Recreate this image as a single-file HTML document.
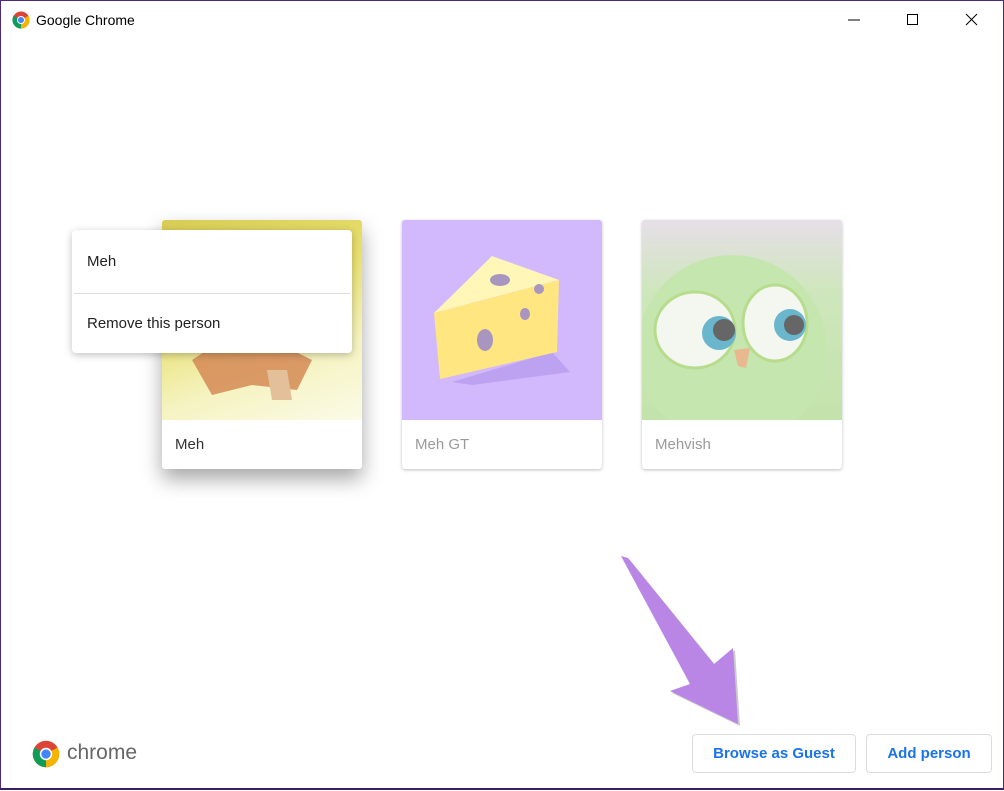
<!DOCTYPE html>
<html><head><style>
*{margin:0;padding:0;box-sizing:border-box}
body{width:1004px;height:791px;background:#fff;font-family:"Liberation Sans",sans-serif;position:relative;overflow:hidden}
.frame{position:absolute;left:0;top:0;width:1004px;height:790px;border:1px solid #4b2a7a;border-bottom:2px solid #3a1f63}
.title{position:absolute;left:36px;top:12px;font-size:14px;color:#000}
.card{position:absolute;top:220px;width:200px;height:249px;background:#fff;border-radius:3px;box-shadow:0 1px 3px rgba(0,0,0,.25);overflow:hidden}
.card .img{height:200px;position:relative}
.card .name{position:absolute;left:13px;top:216px;font-size:15px;color:#999}
.menu{position:absolute;left:72px;top:230px;width:280px;height:123px;background:#fff;border-radius:4px;box-shadow:0 2px 8px rgba(0,0,0,.25)}
.menu div{font-size:15px;color:#222;position:absolute;left:15px}
.btn{position:absolute;top:734px;height:39px;border:1px solid #dadce0;border-radius:4px;color:#1a73e8;font-size:15px;font-weight:bold;text-align:center;line-height:38px}
</style></head><body>
<div class="frame"></div>
<svg style="position:absolute;left:12px;top:11px" width="18" height="18" viewBox="0 0 18 18"><circle cx="9" cy="9" r="8.5" fill="#db4437"/><path d="M9 9 L16.4 4.8 A8.5 8.5 0 0 1 9 17.5Z" fill="#f4b400"/><path d="M9 9 L1.6 13.2 A8.5 8.5 0 0 1 1.6 4.8 L9 9 L9 17.5 A8.5 8.5 0 0 1 1.6 13.2Z" fill="#0f9d58"/><circle cx="9" cy="9" r="4" fill="#fff"/><circle cx="9" cy="9" r="3" fill="#4285f4"/></svg>
<div class="title">Google Chrome</div>
<svg style="position:absolute;left:840px;top:10px" width="150" height="20"><line x1="8" y1="10" x2="20" y2="10" stroke="#000"/><rect x="67.5" y="4.5" width="10" height="10" fill="none" stroke="#000"/><path d="M126 4 L137 15 M137 4 L126 15" stroke="#000"/></svg>

<div class="card" style="left:162px;box-shadow:0 10px 20px rgba(0,0,0,.35)"><div class="img" style="background:linear-gradient(160deg,#d7cc55 0%,#e8e070 40%,#f5f3c0 70%,#fbfbe8 100%)"><svg width="200" height="200"><polygon points="30,140 60,120 120,125 150,140 135,170 90,165 50,175" fill="#d58a55" opacity=".85"/><polygon points="105,150 125,150 130,180 110,180" fill="#e3c09a"/></svg></div><div class="name" style="color:#333">Meh</div></div>
<div class="card" style="left:402px"><div class="img" style="background:#d2b8fc">
<svg width="200" height="200"><polygon points="50,162 150,132 168,152 70,165" fill="#bda2f2"/><polygon points="32,93 157,60 155,132 38,159" fill="#ffe680"/><polygon points="32,93 90,36 157,60" fill="#fff6b8"/><ellipse cx="98" cy="60" rx="10" ry="6" fill="#a895c0"/><ellipse cx="137" cy="69" rx="5" ry="5" fill="#a895c0"/><ellipse cx="123" cy="94" rx="5" ry="6" fill="#a895c0"/><ellipse cx="83" cy="120" rx="8" ry="11" fill="#a895c0"/></svg></div><div class="name">Meh GT</div></div>
<div class="card" style="left:642px"><div class="img" style="background:linear-gradient(180deg,#e6dfe8 0%,#cfe6bd 35%,#c3e3ab 100%)">
<svg width="200" height="200"><ellipse cx="90" cy="130" rx="95" ry="95" fill="#c6e6b0"/><ellipse cx="53" cy="110" rx="40" ry="38" fill="#f4f6f0" stroke="#b6dc8c" stroke-width="3"/><ellipse cx="133" cy="103" rx="32" ry="38" fill="#f4f6f0" stroke="#b6dc8c" stroke-width="3"/><circle cx="77" cy="113" r="17" fill="#6ab6cc"/><circle cx="82" cy="110" r="11" fill="#666"/><circle cx="148" cy="105" r="16" fill="#6ab6cc"/><circle cx="152" cy="105" r="10" fill="#666"/><polygon points="92,130 108,128 104,148 96,146" fill="#e8b890"/></svg></div><div class="name">Mehvish</div></div>

<div class="menu"><div style="top:23px">Meh</div><div style="left:2px;right:2px;top:63px;height:1px;background:#ddd"></div><div style="top:85px">Remove this person</div></div>

<svg style="position:absolute;left:0;top:0" width="1004" height="791"><polygon points="621,556 628,558 714,664 733,648 738,724 670,691 690,684" fill="#666" opacity=".35" transform="translate(2,2)"/><polygon points="621,556 628,558 714,664 733,648 738,724 670,691 690,684" fill="#b986e6"/></svg>

<svg style="position:absolute;left:32px;top:740px" width="28" height="28" viewBox="0 0 18 18"><circle cx="9" cy="9" r="8.5" fill="#db4437"/><path d="M9 9 L16.4 4.8 A8.5 8.5 0 0 1 9 17.5Z" fill="#f4b400"/><path d="M9 9 L1.6 13.2 A8.5 8.5 0 0 1 1.6 4.8 L9 9 L9 17.5 A8.5 8.5 0 0 1 1.6 13.2Z" fill="#0f9d58"/><circle cx="9" cy="9" r="4" fill="#fff"/><circle cx="9" cy="9" r="3" fill="#4285f4"/></svg>
<div style="position:absolute;left:67px;top:741px;font-size:21px;color:#666">chrome</div>
<div class="btn" style="left:692px;width:164px">Browse as Guest</div>
<div class="btn" style="left:866px;width:126px">Add person</div>
</body></html>
